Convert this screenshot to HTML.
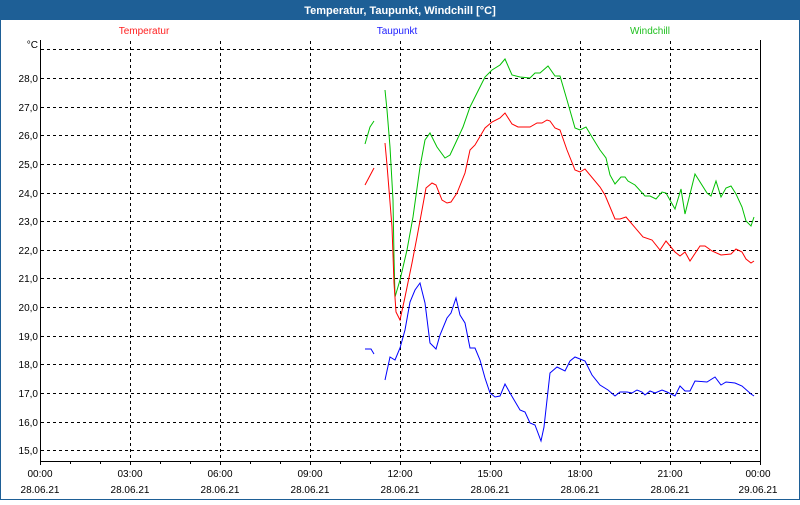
<!DOCTYPE html>
<html><head><meta charset="utf-8"><style>
body{margin:0;width:800px;height:500px;overflow:hidden;background:#fff;font-family:"Liberation Sans",sans-serif}
</style></head><body>
<svg width="800" height="500" xmlns="http://www.w3.org/2000/svg" font-family="Liberation Sans, sans-serif">
<rect x="0" y="0" width="800" height="500" fill="#1e5f96"/>
<rect x="1" y="20" width="798" height="479" fill="#fff"/>
<text x="400" y="14" fill="#fff" font-size="11" font-weight="bold" text-anchor="middle">Temperatur, Taupunkt, Windchill [°C]</text>
<text x="144" y="34" fill="#ff2020" font-size="10" text-anchor="middle">Temperatur</text>
<text x="397" y="34" fill="#2020ff" font-size="10" text-anchor="middle">Taupunkt</text>
<text x="650" y="34" fill="#20c020" font-size="10" text-anchor="middle">Windchill</text>
<g stroke="#000" stroke-width="1" stroke-dasharray="3,3" shape-rendering="crispEdges">
<line x1="41" y1="49.5" x2="760" y2="49.5"/><line x1="41" y1="78.5" x2="760" y2="78.5"/><line x1="41" y1="107.5" x2="760" y2="107.5"/><line x1="41" y1="135.5" x2="760" y2="135.5"/><line x1="41" y1="164.5" x2="760" y2="164.5"/><line x1="41" y1="193.5" x2="760" y2="193.5"/><line x1="41" y1="221.5" x2="760" y2="221.5"/><line x1="41" y1="250.5" x2="760" y2="250.5"/><line x1="41" y1="278.5" x2="760" y2="278.5"/><line x1="41" y1="307.5" x2="760" y2="307.5"/><line x1="41" y1="336.5" x2="760" y2="336.5"/><line x1="41" y1="364.5" x2="760" y2="364.5"/><line x1="41" y1="393.5" x2="760" y2="393.5"/><line x1="41" y1="422.5" x2="760" y2="422.5"/><line x1="41" y1="450.5" x2="760" y2="450.5"/>
<line x1="130.5" y1="41" x2="130.5" y2="460"/><line x1="220.5" y1="41" x2="220.5" y2="460"/><line x1="310.5" y1="41" x2="310.5" y2="460"/><line x1="400.5" y1="41" x2="400.5" y2="460"/><line x1="490.5" y1="41" x2="490.5" y2="460"/><line x1="580.5" y1="41" x2="580.5" y2="460"/><line x1="670.5" y1="41" x2="670.5" y2="460"/>
</g>
<g stroke="#000" stroke-width="1" shape-rendering="crispEdges" fill="none">
<line x1="40.5" y1="40" x2="40.5" y2="461"/><line x1="760.5" y1="40" x2="760.5" y2="465"/><line x1="40" y1="461.5" x2="761" y2="461.5"/>
<path d="M40.5 461v4M70.5 461v3M100.5 461v3M130.5 461v4M160.5 461v3M190.5 461v3M220.5 461v4M250.5 461v3M280.5 461v3M310.5 461v4M340.5 461v3M370.5 461v3M400.5 461v4M430.5 461v3M460.5 461v3M490.5 461v4M520.5 461v3M550.5 461v3M580.5 461v4M610.5 461v3M640.5 461v3M670.5 461v4M700.5 461v3M730.5 461v3"/>
</g>
<g font-size="10" fill="#000" text-anchor="end">
<text x="38" y="48">°C</text><text x="38" y="82">28,0</text><text x="38" y="111">27,0</text><text x="38" y="139">26,0</text><text x="38" y="168">25,0</text><text x="38" y="197">24,0</text><text x="38" y="225">23,0</text><text x="38" y="254">22,0</text><text x="38" y="282">21,0</text><text x="38" y="311">20,0</text><text x="38" y="340">19,0</text><text x="38" y="368">18,0</text><text x="38" y="397">17,0</text><text x="38" y="426">16,0</text><text x="38" y="454">15,0</text>
</g>
<g font-size="10" fill="#000" text-anchor="middle">
<text x="40" y="477">00:00</text><text x="40" y="493">28.06.21</text>
<text x="130" y="477">03:00</text><text x="130" y="493">28.06.21</text>
<text x="220" y="477">06:00</text><text x="220" y="493">28.06.21</text>
<text x="310" y="477">09:00</text><text x="310" y="493">28.06.21</text>
<text x="400" y="477">12:00</text><text x="400" y="493">28.06.21</text>
<text x="490" y="477">15:00</text><text x="490" y="493">28.06.21</text>
<text x="580" y="477">18:00</text><text x="580" y="493">28.06.21</text>
<text x="670" y="477">21:00</text><text x="670" y="493">28.06.21</text>
<text x="758" y="477">00:00</text><text x="758" y="493">29.06.21</text>
</g>
<g fill="none" stroke-width="1">
<g stroke="#00c000">
<polyline points="365,144 370,127 374,121"/>
<polyline points="385,90 387,110 390,147 393,200 394,257 395,297 400,280 407,250 413,217 420,167 425,140 430,133 437,147 445,158 450,155 457,140 463,127 470,107 477,93 485,77 492,70 500,65 505,59 512,75 520,77 530,78 535,73 540,73 548,66 555,76 560,76 567,100 575,128 580,130 586,127 592,137 600,150 606,158 610,175 615,184 621,177 625,177 628,181 635,185 645,196 650,196 656,199 662,192 666,193 675,209 681,189 685,214 695,174 707,193 711,196 716,181 721,197 726,188 731,186 736,194 742,207 746,221 751,226 754,217"/>
</g>
<g stroke="#ff0000">
<polyline points="365,185 374,168"/>
<polyline points="385,143 387,165 392,227 394,283 396,312 400,320 405,297 412,263 417,237 422,210 426,188 432,183 436,185 442,200 447,203 451,202 457,193 465,173 470,150 475,145 485,128 492,122 500,118 505,113 512,124 518,127 530,127 537,123 542,123 547,120 550,121 555,128 560,130 567,150 575,170 580,172 585,169 600,187 605,195 615,219 620,219 626,217 643,237 652,240 660,250 666,241 675,252 680,256 685,252 690,261 700,246 705,246 712,251 721,255 731,254 736,249 742,252 746,259 751,263 754,261"/>
</g>
<g stroke="#0000ff">
<polyline points="365,349 371,349 374,354"/>
<polyline points="385,380 390,357 395,360 400,348 405,330 410,302 415,290 420,283 425,303 430,343 436,349 440,335 447,318 451,313 456,298 460,315 465,323 470,348 475,348 480,360 485,378 490,393 495,397 500,396 505,384 510,393 520,410 525,412 530,423 535,425 541,441 544,427 550,373 557,367 565,371 570,361 575,357 585,361 592,375 600,385 608,390 615,396 620,392 627,392 632,393 637,390 642,392 645,395 650,391 655,393 662,390 667,392 675,396 680,386 685,391 690,391 695,381 707,382 715,377 721,385 726,382 735,383 742,386 751,394 754,396"/>
</g>
</g>
</svg>
</body></html>
